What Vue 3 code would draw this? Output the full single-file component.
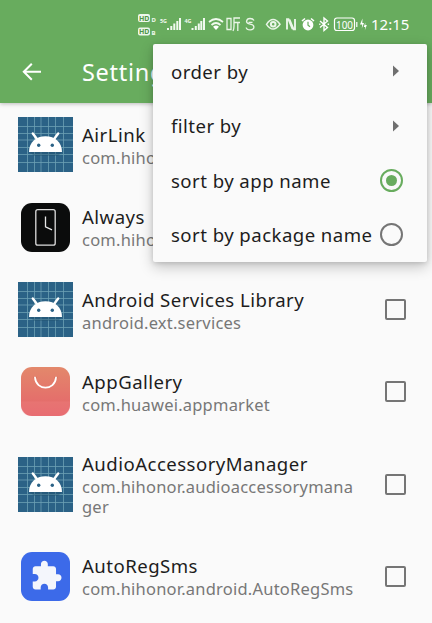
<script setup>
const apps = [
  { name: 'AirLink', pkg: 'com.hihonor', icon: 'android' },
  { name: 'Always', pkg: 'com.hihonor', icon: 'aod' },
  { name: 'Android Services Library', pkg: 'android.ext.services', icon: 'android' },
  { name: 'AppGallery', pkg: 'com.huawei.appmarket', icon: 'gallery' },
  { name: 'AudioAccessoryManager', pkg: 'com.hihonor.audioaccessorymanager', icon: 'android' },
  { name: 'AutoRegSms', pkg: 'com.hihonor.android.AutoRegSms', icon: 'puzzle' },
]
const menu = [
  { label: 'order by', kind: 'sub' },
  { label: 'filter by', kind: 'sub' },
  { label: 'sort by app name', kind: 'radio', on: true },
  { label: 'sort by package name', kind: 'radio', on: false },
]
const gridLines = [9.5, 16.5, 23, 30.5, 37.5, 45.5]
</script>

<template>
  <div class="screen">
    <header class="header">
      <div class="status">
        <svg class="glyphs" width="240" height="30" viewBox="130 10 240 30">
          <g fill="#eef7ec">
            <rect x="138" y="14" width="12" height="8" rx="2" />
            <rect x="138" y="27.500" width="12" height="8" rx="2" />
          </g>
          <g class="tiny">
            <text x="139" y="20.700" class="hd">HD</text>
            <text x="139" y="34.200" class="hd">HD</text>
            <text x="151.500" y="21.500">D</text>
            <text x="151.500" y="35">B</text>
            <text x="160" y="23" textLength="7" lengthAdjust="spacingAndGlyphs">5G</text>
            <text x="184.500" y="23" textLength="7" lengthAdjust="spacingAndGlyphs">4G</text>
          </g>
          <g fill="none" stroke="#f2faf0" stroke-width="2">
            <path d="M168 30v-2M171.300 30v-4M174.300 30v-6.500M177.300 30v-9M180 30v-12" />
            <path d="M192.500 30v-2M195.800 30v-4M198.800 30v-6.500M201.300 30v-9M204 30v-12" />
            <path d="M209 22q7-6 14 0M211.500 25q4.500-4 9 0" stroke-width="1.700" />
          </g>
          <path d="M213 26.800q3-2.500 6 0l-3 3.200z" fill="#fff" />
          <g fill="none" stroke="#eaf5e8" stroke-width="1.300">
            <path d="M227 18.500h4v11h-4zM240 18h-6v8q0 3-1 5M234 22.500h6M237.800 22.500v8.500" />
            <path d="M254 20.500q-1-2-4-2t-3.500 2.800q0 2.200 3.700 2.900t3.700 2.800q0 2.800-3.700 2.800t-4-2.300M248.500 22.300h4" />
            <path d="M266.500 24.300q6.500-9.500 13.500 0q-7 9.500-13.500 0z" stroke-width="1.500" />
            <circle cx="273.200" cy="24.300" r="2.300" stroke-width="2" />
            <path d="M287 29.500V19.300h1.500l4 9.700M295 19v10.200h-1.500l-4-9.700" stroke-width="1.900" />
          </g>
          <circle cx="308" cy="25" r="5.400" fill="#fff" />
          <path d="M302 21l3-2.500M314 21l-3-2.500" stroke="#fff" stroke-width="1.600" />
          <path d="M308 21.800v3.500l2 1.500" fill="none" stroke="#68ac5e" stroke-width="1.200" />
          <path d="M320 21l7.500 6.500-3.500 3V18l3.500 3-7.500 6.500M319.200 24.200h1.200M327.600 24.200h1.500" fill="none" stroke="#fff" stroke-width="1.400" />
          <rect x="334.500" y="18" width="20" height="12.500" rx="2.500" fill="none" stroke="#fff" stroke-width="1.200" />
          <path d="M356.800 22v5" stroke="#fff" stroke-width="1.200" />
          <text x="336" y="28.500" class="battery" textLength="17" lengthAdjust="spacingAndGlyphs">100</text>
          <path d="M362.500 18.500l-2.500 6h2.200l-.4 4 2.200-5.500h-1.700zM365.300 22.500l-1.500 4.500h1.500l-.5 3.500 2-5.500h-1.500z" fill="#fff" />
        </svg>
        <span class="time">12:15</span>
      </div>
      <div class="toolbar">
        <svg width="20" height="20" viewBox="0 0 20 20" class="back">
          <path d="M19 9.700H2M9.800 1.700l-8 8 8 8" fill="none" stroke="#fff" stroke-width="2" />
        </svg>
        <h1>Settings</h1>
      </div>
    </header>

    <main class="list">
      <div v-for="app in apps" :key="app.name" class="row">
        <svg v-if="app.icon === 'android'" class="icon" viewBox="0 0 55 55">
          <rect width="55" height="55" fill="#2b6286" />
          <g stroke="#6c9fb4" stroke-width=".8">
            <path v-for="p in gridLines" :key="p" :d="`M${p} 0V55M0 ${p}H55`" />
          </g>
          <path d="M12 35H44L40 39H16z" fill="#204f6c" opacity=".4" />
          <path d="M14.800 16.500l4.500 6M40.200 16.500l-4.500 6" stroke="#fff" stroke-width="2.400" stroke-linecap="round" />
          <path d="M11 35C11 25.500 18 19.300 27.500 19.300S44 25.500 44 35z" fill="#fff" />
          <circle cx="20.700" cy="28.300" r="1.700" fill="#2b6286" />
          <circle cx="34.300" cy="28.300" r="1.700" fill="#2b6286" />
        </svg>
        <svg v-else-if="app.icon === 'aod'" class="icon" viewBox="0 0 55 55">
          <rect x="3" y="3" width="49" height="49" rx="11" fill="#0b0c0c" />
          <rect x="17.800" y="9.700" width="19.400" height="35.500" rx="2" fill="none" stroke="#ddd" stroke-width="1.300" />
          <path d="M27.500 16.500v10.300l6.500 3" fill="none" stroke="#e8e8e8" stroke-width="1.300" />
        </svg>
        <svg v-else-if="app.icon === 'gallery'" class="icon" viewBox="0 0 55 55">
          <defs>
            <linearGradient id="bag" x1="0" y1="0" x2="0" y2="1">
              <stop offset="0" stop-color="#e3886b" />
              <stop offset="1" stop-color="#e5636b" />
            </linearGradient>
          </defs>
          <rect x="3" y="3" width="49" height="49" rx="11" fill="url(#bag)" />
          <path d="M3 37.500h49V41q0 11-11 11H14Q3 52 3 41z" fill="#f08484" opacity=".3" />
          <circle cx="17" cy="13.500" r="1.600" fill="#d66e58" />
          <circle cx="38" cy="13.500" r="1.600" fill="#d66e58" />
          <path d="M17 13.500c1 13.500 20 13.500 21 0" fill="none" stroke="#fff" stroke-width="1.800" stroke-linecap="round" />
        </svg>
        <svg v-else class="icon" viewBox="0 0 55 55">
          <rect x="3" y="3" width="49" height="49" rx="11" fill="#3c6ae9" />
          <g transform="translate(12 10.300) scale(1.370)">
            <path d="M20.500 11H19V7c0-1.100-.9-2-2-2h-4V3.500C13 2.120 11.880 1 10.500 1S8 2.120 8 3.500V5H4c-1.100 0-1.990.9-1.990 2v3.800H3.500c1.490 0 2.700 1.210 2.700 2.700s-1.210 2.700-2.700 2.700H2V20c0 1.100.9 2 2 2h3.800v-1.500c0-1.490 1.210-2.700 2.700-2.700 1.490 0 2.700 1.210 2.700 2.700V22H17c1.100 0 2-.9 2-2v-4h1.500c1.380 0 2.500-1.120 2.500-2.500S21.880 11 20.500 11z" fill="#f4f6fc" />
          </g>
        </svg>
        <div class="texts">
          <div class="name">{{ app.name }}</div>
          <div class="pkg">{{ app.pkg }}</div>
        </div>
        <span class="box"></span>
      </div>
    </main>

    <div class="menu">
      <div v-for="m in menu" :key="m.label" class="item">
        <span class="label">{{ m.label }}</span>
        <svg v-if="m.kind === 'sub'" class="arrow" width="6" height="12" viewBox="0 0 6 12">
          <path d="M0 .5L6 6 0 11.500z" fill="#6f6f6f" />
        </svg>
        <span v-else class="radio" :class="{ on: m.on }"></span>
      </div>
    </div>
  </div>
</template>

<style>
body {
  margin: 0;
  background: #fafafa;
}
</style>

<style scoped>
.screen {
  position: relative;
  width: 432px;
  height: 623px;
  overflow: hidden;
  background: #fafafa;
  font-family: "Noto Sans", "Open Sans", sans-serif;
}
.header {
  height: 103px;
  background: #68ac5e;
  box-shadow: 0 1px 4px rgba(0, 0, 0, 0.25);
  color: #fff;
}
.status {
  display: flex;
  align-items: center;
  height: 48px;
  padding-left: 130px;
}
.glyphs {
  flex: none;
  margin-top: 2px;
}
.tiny {
  fill: #f2faf0;
  font-size: 6px;
  font-weight: 700;
}
.hd {
  fill: #4f9646;
  font-size: 7px;
}
.battery {
  fill: #fff;
  font-size: 11px;
}
.time {
  margin-left: 1px;
  font-size: 15px;
  line-height: 20px;
}
.toolbar {
  display: flex;
  align-items: center;
  height: 48px;
  padding-left: 22px;
}
.back {
  flex: none;
}
h1 {
  margin: 0 0 0 40px;
  font-size: 23.5px;
  font-weight: 400;
  letter-spacing: 0.7px;
  line-height: 32px;
}
.list {
  display: flex;
  flex-direction: column;
  padding-top: 0.6px;
}
.row {
  display: flex;
  align-items: center;
  box-sizing: border-box;
  min-height: 82.4px;
  padding: 0 26px 0 18px;
}
.icon {
  flex: none;
  width: 55px;
  height: 55px;
}
.texts {
  flex: none;
  width: 276px;
  margin-left: 9px;
  padding: 18px 0;
}
.name {
  color: #1d1d1d;
  font-size: 18.6px;
  letter-spacing: 0.46px;
  line-height: 25px;
}
.pkg {
  margin-top: 1px;
  color: #777;
  font-size: 16.5px;
  letter-spacing: 0.22px;
  line-height: 20px;
  word-break: break-all;
}
.box {
  box-sizing: border-box;
  flex: none;
  width: 21px;
  height: 21px;
  margin-left: auto;
  border: 2px solid #757575;
  border-radius: 2px;
}
.menu {
  position: absolute;
  top: 44px;
  left: 153px;
  box-sizing: border-box;
  width: 274px;
  height: 218px;
  border-radius: 2px;
  background: #fafafa;
  box-shadow: 0 5px 14px rgba(0, 0, 0, 0.22), 0 1px 5px rgba(0, 0, 0, 0.14);
}
.item {
  display: flex;
  align-items: center;
  justify-content: space-between;
  box-sizing: border-box;
  height: 54.5px;
  padding: 0 24px 0 18px;
  color: #1d1d1d;
  font-size: 18.6px;
  letter-spacing: 0.45px;
  white-space: nowrap;
}
.arrow {
  margin-right: 4px;
}
.radio {
  display: flex;
  align-items: center;
  justify-content: center;
  box-sizing: border-box;
  flex: none;
  width: 23px;
  height: 23px;
  border: 2px solid #757575;
  border-radius: 50%;
}
.radio.on {
  border-color: #68ac5e;
}
.radio.on::after {
  width: 11.5px;
  height: 11.5px;
  border-radius: 50%;
  background: #68ac5e;
  content: "";
}
</style>
